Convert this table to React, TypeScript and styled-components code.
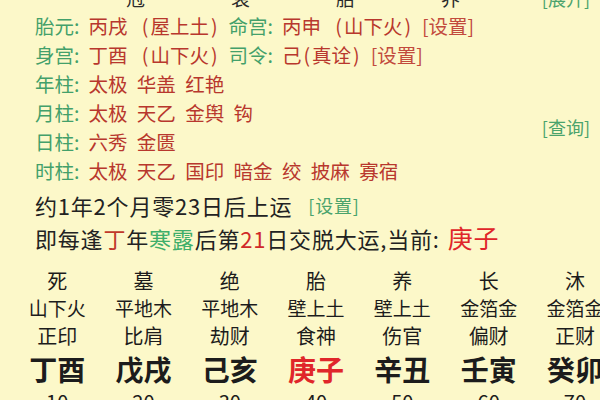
import React from "react";
import styled, { createGlobalStyle } from "styled-components";

const Global = createGlobalStyle`
  html, body { margin: 0; padding: 0; background: #fcf8c9; }
  body { width: 600px; height: 400px; overflow: hidden; font-family: "Noto Sans CJK SC", "Noto Sans", sans-serif; }
`;

const Page = styled.div`
  width: 600px;
  height: 400px;
  overflow: hidden;
  background: #fcf8c9;
  display: flex;
  flex-direction: column;
`;

const TopRow = styled.div`
  display: flex;
  align-items: center;
  height: 29px;
  margin-top: -16px;
  padding-left: 83px;
  padding-right: 10px;
  font-size: 19px;
  color: #2a2a2a;
`;

const TopCell = styled.div`
  width: 105px;
  text-align: center;
`;

const Link = styled.span<{ $tone?: "green" | "red" }>`
  color: ${(p) => (p.$tone === "red" ? "#c24a3d" : "#4aa36c")};
  font-size: ${(p) => (p.$tone === "red" ? "19.5px" : "18px")};
  word-spacing: 0;
`;

const RightLink = styled(Link)`
  margin-left: auto;
`;

const InfoBlock = styled.div`
  padding-left: 35px;
  padding-right: 10px;
  display: flex;
  flex-direction: column;
`;

const Line = styled.div<{ $ws?: number }>`
  height: 29px;
  display: flex;
  align-items: center;
  font-size: 19.5px;
  white-space: nowrap;
  gap: 9px;
  word-spacing: ${(p) => p.$ws ?? 8}px;
`;

const Label = styled.span`
  color: #43a06a;
  word-spacing: 0;
`;

const Value = styled.span`
  color: #b8372d;
`;

const Paren = styled.span`
  margin: 0 2px;
`;

const PillarArea = styled.div`
  display: flex;
  align-items: center;
`;

const PillarLines = styled.div`
  display: flex;
  flex-direction: column;
  flex: 1;
`;

const Luck = styled.div`
  padding-left: 35px;
  margin-top: 4px;
  display: flex;
  flex-direction: column;
  color: #222;
`;

const LuckLine = styled.div`
  height: 32px;
  display: flex;
  align-items: center;
  font-size: 22px;
  letter-spacing: 0.8px;
  white-space: nowrap;
  gap: 16px;
`;

const Hl = styled.span<{ $c: string }>`
  color: ${(p) => p.$c};
`;

const Current = styled.span`
  color: #e0262a;
  font-size: 25px;
  margin-left: 8px;
`;

const Grid = styled.div`
  margin-top: 14px;
  padding-left: 14px;
  display: grid;
  grid-template-columns: repeat(7, 86.3px);
  color: #222;
`;

const Cell = styled.div<{ $h: number; $size: number; $bold?: boolean; $red?: boolean }>`
  height: ${(p) => p.$h}px;
  display: flex;
  align-items: center;
  justify-content: center;
  font-size: ${(p) => p.$size}px;
  font-weight: ${(p) => (p.$bold ? 700 : 400)};
  color: ${(p) => (p.$red ? "#e0262a" : "#1c1c1c")};
  white-space: nowrap;
`;

const stages = ["死", "墓", "绝", "胎", "养", "长", "沐"];
const nayin = ["山下火", "平地木", "平地木", "壁上土", "壁上土", "金箔金", "金箔金"];
const gods = ["正印", "比肩", "劫财", "食神", "伤官", "偏财", "正财"];
const pillars = ["丁酉", "戊戌", "己亥", "庚子", "辛丑", "壬寅", "癸卯"];
const ages = ["10", "20", "30", "40", "50", "60", "70"];

const pillarRows: [string, string][] = [
  ["年柱:", "太极 华盖 红艳"],
  ["月柱:", "太极 天乙 金舆 钩"],
  ["日柱:", "六秀 金匮"],
  ["时柱:", "太极 天乙 国印 暗金 绞 披麻 寡宿"],
];

export default function App() {
  return (
    <Page>
      <Global />
      <TopRow>
        {["冠", "衰", "胎", "养"].map((c) => (
          <TopCell key={c}>{c}</TopCell>
        ))}
        <RightLink>[展开]</RightLink>
      </TopRow>
      <InfoBlock>
        <Line>
          <Label>胎元:</Label>
          <Value>丙戌 <Paren>(</Paren>屋上土<Paren>)</Paren></Value>
          <Label>命宫:</Label>
          <Value>丙申 <Paren>(</Paren>山下火<Paren>)</Paren></Value>
          <Link $tone="red">[设置]</Link>
        </Line>
        <Line>
          <Label>身宫:</Label>
          <Value>丁酉 <Paren>(</Paren>山下火<Paren>)</Paren></Value>
          <Label>司令:</Label>
          <Value>己<Paren>(</Paren>真诠<Paren>)</Paren></Value>
          <Link $tone="red">[设置]</Link>
        </Line>
        <PillarArea>
          <PillarLines>
            {pillarRows.map(([l, v]) => (
              <Line key={l} $ws={5}>
                <Label>{l}</Label>
                <Value>{v}</Value>
              </Line>
            ))}
          </PillarLines>
          <Link>[查询]</Link>
        </PillarArea>
      </InfoBlock>
      <Luck>
        <LuckLine>
          <span>约1年2个月零23日后上运</span>
          <Link>[设置]</Link>
        </LuckLine>
        <LuckLine>
          <span>
            即每逢<Hl $c="#c0392b">丁</Hl>年<Hl $c="#3fae6a">寒露</Hl>后第
            <Hl $c="#d02a2a">21</Hl>日交脱大运,当前:
            <Current>庚子</Current>
          </span>
        </LuckLine>
      </Luck>
      <Grid>
        {stages.map((s) => (
          <Cell key={"s" + s} $h={27} $size={20}>{s}</Cell>
        ))}
        {nayin.map((s, i) => (
          <Cell key={"n" + i} $h={27} $size={19}>{s}</Cell>
        ))}
        {gods.map((s) => (
          <Cell key={"g" + s} $h={28} $size={20}>{s}</Cell>
        ))}
        {pillars.map((s) => (
          <Cell key={"p" + s} $h={40} $size={28} $bold $red={s === "庚子"}>{s}</Cell>
        ))}
        {ages.map((s) => (
          <Cell key={"a" + s} $h={24} $size={20}>{s}</Cell>
        ))}
      </Grid>
    </Page>
  );
}
